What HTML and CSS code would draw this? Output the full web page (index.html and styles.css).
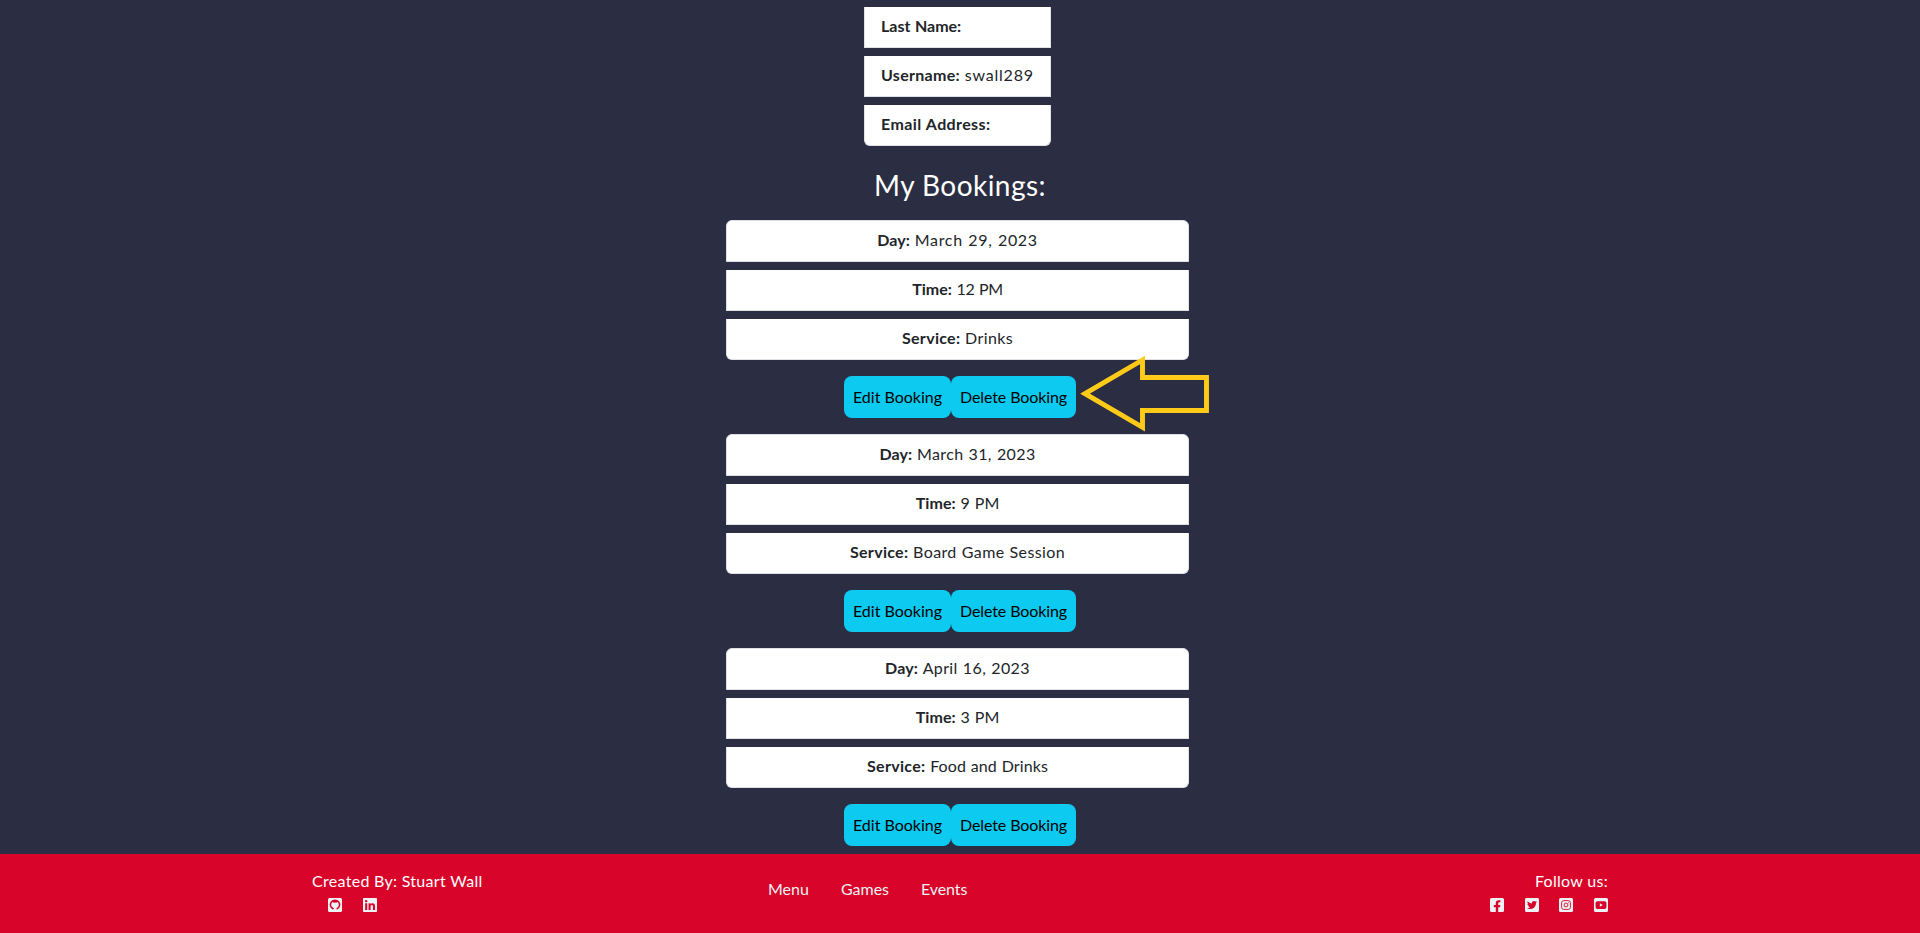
FILE: index.html
```
<!DOCTYPE html>
<html lang="en">
<head>
<meta charset="utf-8">
<title>My Profile</title>
<link rel="stylesheet" href="styles.css">
</head>
<body>
<main class="main">
  <ul class="list profile">
    <li class="item"><b class="t0">Last Name:</b></li>
    <li class="item"><b class="t3">Username:</b> <span class="t8">swall289</span></li>
    <li class="item"><b class="t4">Email Address:</b></li>
  </ul>
  <h3 class="heading">My Bookings:</h3>

  <section class="booking">
    <ul class="list wide">
      <li class="item first"><b class="t1">Day:</b> <span class="t7">March 29, 2023</span></li>
      <li class="item"><b class="t0">Time:</b> <span class="tn3">12 PM</span></li>
      <li class="item"><b class="t3">Service:</b> <span class="t4">Drinks</span></li>
    </ul>
    <div class="actions">
      <a class="btn edit">Edit Booking</a><a class="btn delete">Delete Booking</a>
      <svg class="arrow" width="132" height="78" viewBox="0 0 132 78"><path d="M6 38.7 63.5 5v17.5h64v33h-64V72.3z" fill="none" stroke="#ffca18" stroke-width="4.9"/></svg>
    </div>
  </section>

  <section class="booking">
    <ul class="list wide">
      <li class="item first"><b class="t1">Day:</b> <span class="t4">March 31, 2023</span></li>
      <li class="item"><b class="t1">Time:</b> <span class="t1">9 PM</span></li>
      <li class="item"><b class="t3">Service:</b> <span class="t4">Board Game Session</span></li>
    </ul>
    <div class="actions"><a class="btn edit">Edit Booking</a><a class="btn delete">Delete Booking</a></div>
  </section>

  <section class="booking">
    <ul class="list wide">
      <li class="item first"><b class="t1">Day:</b> <span class="t4">April 16, 2023</span></li>
      <li class="item"><b class="t1">Time:</b> <span class="t1">3 PM</span></li>
      <li class="item"><b class="t3">Service:</b> <span class="t1">Food and Drinks</span></li>
    </ul>
    <div class="actions"><a class="btn edit">Edit Booking</a><a class="btn delete">Delete Booking</a></div>
  </section>
</main>

<footer class="footer">
  <div class="credit">
    <div class="label t3">Created By: Stuart Wall</div>
    <div class="icons">
      <svg class="icon" viewBox="0 32 448 448"><rect y="32" width="448" height="448" rx="48"/><path class="ring" d="M172 384a146 146 0 1 1 104 0"/><path class="dot" d="M140 160l52 20q32-8 64 0l52-20-30-50H170zM100 310q30 0 44 28 12 22 38 16v28q-44 6-60-26-8-18-28-26z"/></svg>
      <svg class="icon" viewBox="0 32 448 448"><path d="M416 32H31.9C14.3 32 0 46.5 0 64.3v383.4C0 465.5 14.3 480 31.9 480H416c17.6 0 32-14.5 32-32.3V64.3c0-17.8-14.4-32.3-32-32.3zM135.4 416H69V202.2h66.5V416zm-33.2-243c-21.3 0-38.5-17.3-38.5-38.5S80.9 96 102.2 96c21.2 0 38.5 17.3 38.5 38.5 0 21.3-17.2 38.5-38.5 38.5zm282.1 243h-66.4V312c0-24.8-.5-56.7-34.5-56.7-34.6 0-39.9 27-39.9 54.9V416h-66.4V202.2h63.7v29.2h.9c8.9-16.8 30.6-34.5 62.9-34.5 67.2 0 79.7 44.3 79.7 101.9V416z"/></svg>
    </div>
  </div>
  <nav class="nav"><a class="t0">Menu</a><a class="t0">Games</a><a class="tn1">Events</a></nav>
  <div class="follow">
    <div class="label t3">Follow us:</div>
    <div class="icons">
      <svg class="icon" viewBox="0 32 448 448"><path d="M400 32H48A48 48 0 0 0 0 80v352a48 48 0 0 0 48 48h137.25V327.69h-63V256h63v-54.64c0-62.15 37-96.48 93.67-96.48 27.14 0 55.52 4.84 55.52 4.84v61h-31.27c-30.81 0-40.42 19.12-40.42 38.73V256h68.78l-11 71.69h-57.78V480H400a48 48 0 0 0 48-48V80a48 48 0 0 0-48-48z"/></svg>
      <svg class="icon" viewBox="0 32 448 448"><path d="M400 32H48C21.5 32 0 53.5 0 80v352c0 26.5 21.5 48 48 48h352c26.5 0 48-21.5 48-48V80c0-26.5-21.5-48-48-48zm-48.9 158.8c.2 2.8.2 5.7.2 8.5 0 86.7-66 186.6-186.6 186.6-37.2 0-71.7-10.8-100.7-29.4 5.3.6 10.4.8 15.8.8 30.7 0 58.9-10.4 81.4-28-28.8-.6-53-19.5-61.3-45.5 10.1 1.5 19.2 1.5 29.6-1.2-30-6.1-52.5-32.5-52.5-64.4v-.8c8.7 4.9 18.9 7.9 29.6 8.3a65.447 65.447 0 0 1-29.2-54.6c0-12.2 3.2-23.4 8.9-33.1 32.3 39.8 80.8 65.8 135.2 68.6-9.3-44.5 24-80.6 64-80.6 18.9 0 35.9 7.9 47.9 20.7 14.8-2.8 29-8.3 41.6-15.8-4.9 15.2-15.2 28-28.8 36.1 13.2-1.4 26-5.1 37.8-10.2-8.9 13.1-20.1 24.7-32.9 34z"/></svg>
      <svg class="icon" viewBox="0 32 448 448"><rect y="32" width="448" height="448" rx="48"/><g class="cut"><rect x="82" y="114" width="284" height="284" rx="72"/><circle cx="224" cy="256" r="62"/></g><circle class="dot" cx="300" cy="181" r="17"/></svg>
      <svg class="icon" viewBox="0 32 448 448"><path fill-rule="evenodd" d="M48 32h352q48 0 48 48v352q0 48-48 48H48q-48 0-48-48V80q0-48 48-48zM110 132q-60 0-60 60v128q0 60 60 60h228q60 0 60-60V192q0-60-60-60zM187 202l95 54-95 54z"/></svg>
    </div>
  </div>
</footer>
</body>
</html>
```
FILE: styles.css
```
* { box-sizing: border-box; }

body {
  margin: 0;
  height: 933px;
  overflow: hidden;
  display: flex;
  flex-direction: column;
  background: #2b2d42;
  color: #212529;
  font: 16px/24px "Lato", sans-serif;
}

.main {
  height: 854px;
  padding-top: 7px;
  display: flex;
  flex-direction: column;
  align-items: center;
}

.list {
  list-style: none;
  margin: 0 5px 0 0;
  padding: 0;
  display: flex;
  flex-direction: column;
  gap: 8px;
}

.profile { width: 187px; }
.wide { width: 463px; text-align: center; }

.item {
  height: 41px;
  padding: 7px 16px;
  background: #fff;
  border: 1px solid #dee2e6;
  border-top: 0;
  white-space: nowrap;
  word-spacing: 0.6px;
}

.item.first {
  height: 42px;
  border-top: 1px solid #dee2e6;
  border-radius: 6px 6px 0 0;
}

.item:last-child { border-radius: 0 0 6px 6px; }

.heading {
  height: 34px;
  margin: 22px 0 18px;
  color: #fff;
  font-size: 28px;
  font-weight: 400;
  line-height: 34px;
  letter-spacing: 0.45px;
}

.booking {
  display: flex;
  flex-direction: column;
  align-items: center;
  gap: 16px;
  margin-bottom: 16px;
}

.actions { display: flex; position: relative; }

.btn {
  height: 42px;
  border-radius: 8px;
  background: #0dcaf0;
  color: #000;
  line-height: 41px;
  text-align: center;
}

.edit { width: 107px; }
.delete { width: 125px; letter-spacing: -0.1px; }

.arrow {
  position: absolute;
  left: 235px;
  top: -21px;
}

.footer {
  height: 79px;
  padding: 15px 312px 0;
  display: grid;
  grid-template-columns: 1fr auto 1fr;
  background: #d90429;
  color: #fff;
}

.icons { display: flex; gap: 20.6px; }
.credit .icons { padding-left: 16px; }

.icon {
  width: 14px;
  height: 14px;
  margin-top: 5px;
  display: block;
  fill: #edf2f4;
}

.cut { fill: none; stroke: #d90429; stroke-width: 28px; }
.ring { fill: none; stroke: #d90429; stroke-width: 48px; }
.dot { fill: #d90429; }

.nav {
  display: flex;
  gap: 32px;
  width: 384px;
  padding: 8px 0 0;
  color: #edf2f4;
}

.follow {
  display: flex;
  flex-direction: column;
  align-items: flex-end;
}

.tn3 { letter-spacing: -0.3px; }
.tn1 { letter-spacing: -0.1px; }
.t0 { letter-spacing: 0; }
.t1 { letter-spacing: 0.1px; }
.t3 { letter-spacing: 0.3px; }
.t4 { letter-spacing: 0.38px; }
.t7 { letter-spacing: 0.7px; }
.t8 { letter-spacing: 0.8px; }
```
